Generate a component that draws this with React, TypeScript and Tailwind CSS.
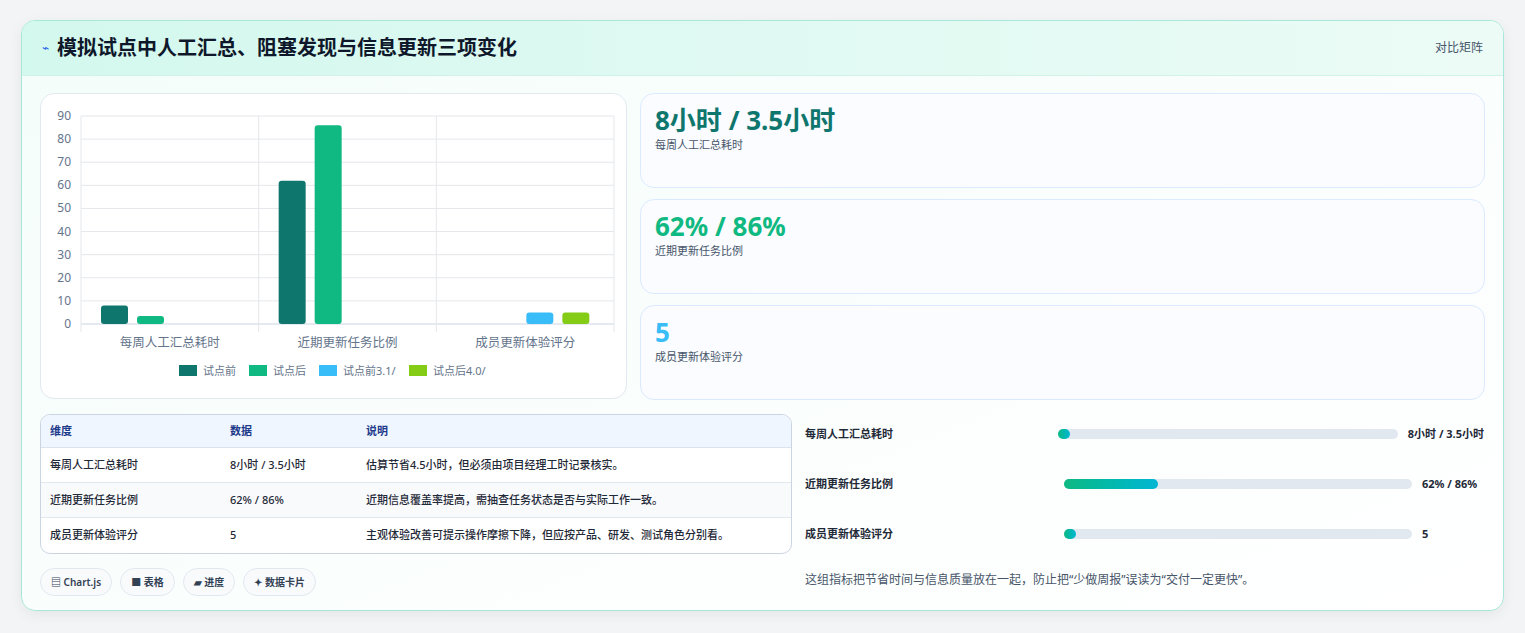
import React from "react";

const F = { fontFamily: '"Noto Sans","Noto Sans CJK SC",sans-serif' };

function Chart() {
  const x0 = 40, y0 = 230, top = 22, w = 533;
  const unit = (y0 - top) / 90;
  const ticks = [0,10,20,30,40,50,60,70,80,90];
  const cat = w / 3;
  const bars = [
    { c: 0, o: 20, v: 8, col: "#0f766e" },
    { c: 0, o: 56, v: 3.5, col: "#10b981" },
    { c: 1, o: 20, v: 62, col: "#0f766e" },
    { c: 1, o: 56, v: 86, col: "#10b981" },
    { c: 2, o: 90, v: 5, col: "#38bdf8" },
    { c: 2, o: 126, v: 5, col: "#84cc16" },
  ];
  const labels = ["每周人工汇总耗时", "近期更新任务比例", "成员更新体验评分"];
  const legend: [string, string, number][] = [["试点前","#0f766e",138],["试点后","#10b981",208],["试点前3.1/","#38bdf8",278],["试点后4.0/","#84cc16",368]];
  return (
    <svg width="586" height="305" style={F}>
      {ticks.map(t => (
        <g key={t}>
          <line x1={x0} x2={x0 + w} y1={y0 - t * unit} y2={y0 - t * unit} stroke={t === 0 ? "#cbd5e1" : "#e5e7eb"} />
          <text x={x0 - 10} y={y0 - t * unit + 4} textAnchor="end" fontSize="12" fill="#64748b">{t}</text>
        </g>
      ))}
      {[0,1,2,3].map(i => <line key={i} x1={x0 + i * cat} x2={x0 + i * cat} y1={top} y2={y0 + 8} stroke="#e5e7eb" />)}
      {bars.map((b, i) => (
        <rect key={i} x={x0 + b.c * cat + b.o} y={y0 - b.v * unit} width={27} height={b.v * unit} rx={3} fill={b.col} />
      ))}
      {labels.map((l, i) => <text key={l} x={x0 + i * cat + cat / 2} y={253} textAnchor="middle" fontSize="12.5" fill="#64748b">{l}</text>)}
      {legend.map(([t, c, x]) => (
        <g key={t}>
          <rect x={x} y={271} width={18} height={11} fill={c} />
          <text x={x + 24} y={281} fontSize="11" fill="#64748b">{t}</text>
        </g>
      ))}
    </svg>
  );
}

const stats = [
  ["8小时 / 3.5小时", "每周人工汇总耗时", "text-[#0f766e]"],
  ["62% / 86%", "近期更新任务比例", "text-[#10b981]"],
  ["5", "成员更新体验评分", "text-[#38bdf8]"],
];

const rows = [
  ["每周人工汇总耗时", "8小时 / 3.5小时", "估算节省4.5小时，但必须由项目经理工时记录核实。"],
  ["近期更新任务比例", "62% / 86%", "近期信息覆盖率提高，需抽查任务状态是否与实际工作一致。"],
  ["成员更新体验评分", "5", "主观体验改善可提示操作摩擦下降，但应按产品、研发、测试角色分别看。"],
];

const progress = [
  ["每周人工汇总耗时", "8小时 / 3.5小时", "w-[12px]"],
  ["近期更新任务比例", "62% / 86%", "w-[27%]"],
  ["成员更新体验评分", "5", "w-[12px]"],
];

export default function App() {
  return (
    <div className="w-[1525px] h-[633px] bg-[#f3f4f6] pt-[20px] pl-[21px]" style={F}>
      <div className="w-[1483px] h-[591px] rounded-[14px] border border-[#a7e8d8] bg-gradient-to-br from-[#f4fdfa] to-[#ffffff] overflow-hidden shadow-[0_4px_14px_rgba(0,0,0,0.06)]">
        <div className="h-[55px] flex items-center justify-between px-[20px] bg-gradient-to-r from-[#d3f8ee] to-[#ecfbf6] border-b border-[#d1f2e8]">
          <div className="flex items-center gap-[8px]">
            <span className="text-[#2563eb] text-[12px]">⌁</span>
            <span className="text-[20px] font-bold text-[#0f172a]">模拟试点中人工汇总、阻塞发现与信息更新三项变化</span>
          </div>
          <span className="text-[12px] text-[#475569]">对比矩阵</span>
        </div>
        <div className="px-[18px] pt-[17px]">
          <div className="flex gap-[13px]">
            <div className="w-[587px] h-[306px] rounded-[14px] border border-[#e2e8f0] bg-white">
              <Chart />
            </div>
            <div className="flex-1 flex flex-col gap-[11px]">
              {stats.map(([v, l, c]) => (
                <div key={l} className="h-[95px] rounded-[14px] border border-[#dbeafe] bg-[#fafcff] px-[14px] pt-[9px]">
                  <div className={`text-[26px] font-bold leading-[34px] ${c}`}>{v}</div>
                  <div className="text-[11px] text-[#475569]">{l}</div>
                </div>
              ))}
            </div>
          </div>
          <div className="flex gap-[13px] mt-[14px]">
            <div className="w-[752px]">
              <div className="rounded-[10px] border border-[#cbd5e1] overflow-hidden bg-white">
                <div className="flex h-[33px] items-center bg-[#eff6ff] border-b border-[#dbe3ee] text-[11px] text-[#1e3a8a] font-semibold">
                  <div className="w-[189px] pl-[9px]">维度</div>
                  <div className="w-[136px]">数据</div>
                  <div>说明</div>
                </div>
                {rows.map((r, i) => (
                  <div key={i} className={`flex h-[35px] items-center text-[11px] font-medium text-[#1f2937] ${i < 2 ? "border-b border-[#e2e8f0]" : ""} ${i === 1 ? "bg-[#f8fafc]" : ""}`}>
                    <div className="w-[189px] pl-[9px]">{r[0]}</div>
                    <div className="w-[136px]">{r[1]}</div>
                    <div>{r[2]}</div>
                  </div>
                ))}
              </div>
              <div className="flex gap-[8px] mt-[14px]">
                {["▤ Chart.js", "■ 表格", "▰ 进度", "✦ 数据卡片"].map(t => (
                  <div key={t} className="h-[28px] px-[10px] flex items-center rounded-full border border-[#e2e8f0] bg-[#f8fafc] text-[10px] font-semibold text-[#334155]">{t}</div>
                ))}
              </div>
            </div>
            <div className="flex-1 pr-[1px] -mt-[5px]">
              {progress.map(([l, v, fw]) => (
                <div key={l} className="flex items-center gap-[10px] h-[50px]">
                  <div className="flex-[1] text-[11px] font-semibold text-[#1f2937]">{l}</div>
                  <div className="flex-[1.4] h-[10px] rounded-full bg-[#e2e8f0]">
                    <div className={`h-full rounded-full bg-gradient-to-r from-[#10b981] to-[#06b6d4] ${fw}`} />
                  </div>
                  <div className="min-w-[62px] text-[11px] font-bold text-[#1f2937]">{v}</div>
                </div>
              ))}
              <div className="text-[12px] text-[#475569] mt-[12px]">这组指标把节省时间与信息质量放在一起，防止把“少做周报”误读为“交付一定更快”。</div>
            </div>
          </div>
        </div>
      </div>
    </div>
  );
}
